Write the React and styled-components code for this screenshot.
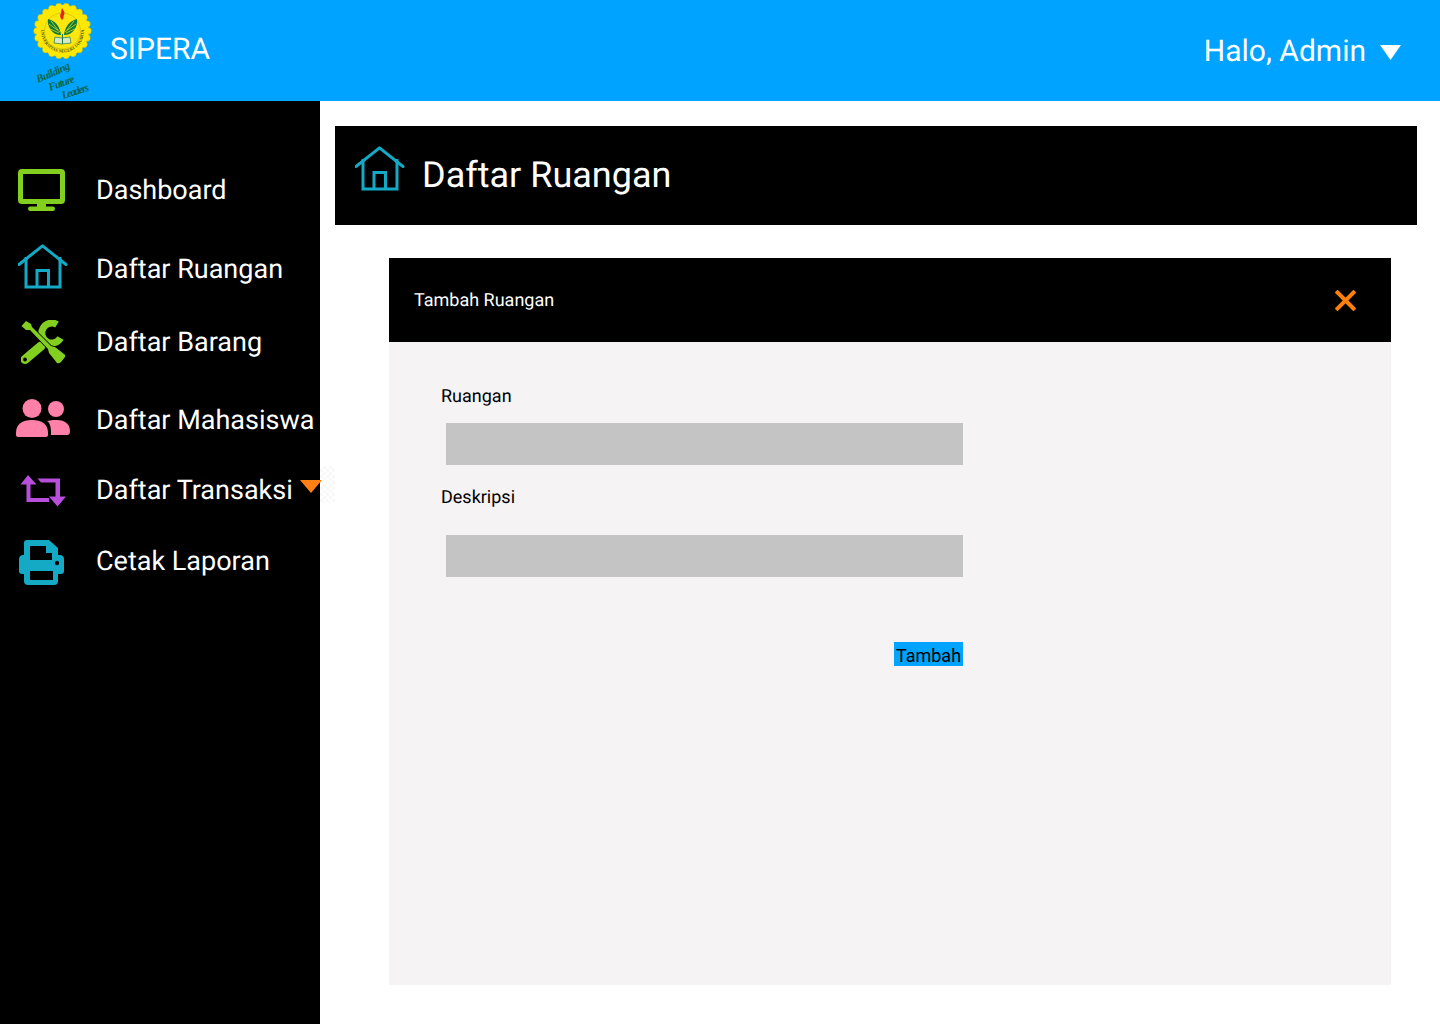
import React from "react";
import styled, { createGlobalStyle } from "styled-components";

const GlobalStyle = createGlobalStyle`
  html, body { margin: 0; padding: 0; background: #fff; }
  body { font-family: Roboto, "Liberation Sans", sans-serif; text-rendering: geometricPrecision; }
  * { box-sizing: border-box; }
`;

const Page = styled.div`
  width: 1440px;
  height: 1024px;
  overflow: hidden;
  display: flex;
  flex-direction: column;
`;

const Header = styled.header`
  height: 101px;
  flex: none;
  background: #00a3ff;
  color: #fff;
  display: flex;
  align-items: center;
  padding: 0 39px 0 30px;
`;

const Brand = styled.div`
  font-size: 30px;
  margin-left: 15px;
  margin-top: -3px;
`;

const UserMenu = styled.div`
  margin-left: auto;
  display: flex;
  align-items: center;
  gap: 14px;
  font-size: 30px;
  padding-top: 2px;
`;

const Caret = styled.span`
  width: 21px;
  height: 15px;
  background: #fff;
  clip-path: polygon(0 0, 100% 0, 50% 100%);
  margin-top: 2px;
`;

const Body = styled.div`
  flex: 1;
  display: flex;
`;

const Sidebar = styled.nav`
  width: 320px;
  flex: none;
  background: #000;
  padding-top: 50px;
  color: #fff;
`;

const MenuRow = styled.div`
  position: relative;
  height: ${(p) => p.$h}px;
  display: flex;
  align-items: center;
  font-size: 27px;
  white-space: nowrap;
`;

const IconSlot = styled.span`
  width: 96px;
  flex: none;
  display: flex;
  svg {
    display: block;
    margin-left: ${(p) => p.$x}px;
    transform: translateY(${(p) => p.$y}px);
  }
`;

const Ghost = styled.span`
  position: absolute;
  left: 320px;
  top: 1px;
  width: 15px;
  height: 37px;
  background: repeating-conic-gradient(#f8f8f8 0 25%, #fff 0 50%) 0 0 / 6px 6px;
`;

const OrangeCaret = styled.span`
  position: absolute;
  left: 300px;
  top: 15px;
  width: 22px;
  height: 13px;
  background: #ff7f17;
  clip-path: polygon(0 0, 100% 0, 50% 100%);
`;

const Main = styled.main`
  flex: 1;
  padding: 25px 23px 0 15px;
`;

const TitleBar = styled.div`
  height: 99px;
  background: #000;
  color: #fff;
  display: flex;
  align-items: center;
  padding: 0 0 2px 20px;
  gap: 17px;
  font-size: 36px;
  svg { margin-top: -12px; }
`;

const Modal = styled.section`
  margin: 33px 26px 0 54px;
  height: 727px;
  background: #f5f3f4;
`;

const ModalHead = styled.div`
  height: 84px;
  background: #000;
  color: #fff;
  display: flex;
  align-items: center;
  justify-content: space-between;
  padding: 0 35px 0 25px;
  font-size: 18px;
`;

const Form = styled.form`
  width: 574px;
  padding: 44px 0 0 52px;
  display: flex;
  flex-direction: column;
  align-items: flex-start;
`;

const Label = styled.label`
  font-size: 18px;
  line-height: 21px;
  color: #000;
  margin-top: ${(p) => p.$top || 0}px;
`;

const Input = styled.input`
  display: block;
  width: 517px;
  height: 42px;
  margin: ${(p) => p.$top}px 0 0 5px;
  background: #c4c4c4;
  border: none;
  padding: 0;
`;

const SubmitButton = styled.button`
  align-self: flex-end;
  margin-top: 65px;
  height: 24px;
  width: 69px;
  padding: 4px 0 0;
  border: none;
  background: #00a3ff;
  color: #000;
  font-family: inherit;
  font-size: 18px;
  line-height: 20px;
`;

const Logo = () => {
  const bumps = [];
  for (let i = 0; i < 22; i++) {
    const a = (i / 22) * Math.PI * 2;
    bumps.push(
      <circle key={i} cx={62.5 + 25.5 * Math.cos(a)} cy={30 + 24.5 * Math.sin(a)} r="3.4" fill="#ffe800" stroke="#b5a81a" strokeWidth="0.4" />
    );
  }
  return (
    <svg width="65" height="100" viewBox="30 0 65 100">
      {bumps}
      <circle cx="62.5" cy="30" r="26" fill="#ffe800" />
      <circle cx="62.5" cy="30" r="18" fill="#fbe70e" stroke="#a59a16" strokeWidth="0.4" />
      <defs>
        <path id="ring" d="M41 30 A21.5 21.5 0 0 0 84 30" />
      </defs>
      <text fontSize="4.4" fontFamily="Liberation Serif, serif" fill="#4a5a18" fontWeight="700">
        <textPath href="#ring" startOffset="50%" textAnchor="middle">UNIVERSITAS NEGERI JAKARTA</textPath>
      </text>
      <path d="M62 7 C65 11 65 13 63.5 15 C64 17 63 18 62 19 C60 17 59.5 14 61 12 C61 10 61.5 9 62 7Z" fill="#e2231a" />
      <path d="M61 34 C60 26 56 20 48 18 C47 26 52 34 61 34Z" fill="#0d7a3e" />
      <path d="M64 34 C65 26 69 20 77 18 C78 26 73 34 64 34Z" fill="#0d7a3e" />
      <path d="M49 23 L60 31 M51 20 L58 29 M48 27 L59 32 M76 23 L65 31 M74 20 L67 29 M77 27 L66 32" stroke="#fbe70e" strokeWidth="0.7" />
      <path d="M55 36 L62 37 L70 36 L71 42 L62 43 L54 42Z" fill="#d9e8c9" stroke="#1d7a48" strokeWidth="0.7" />
      <path d="M62.5 33 V43" stroke="#1d7a48" strokeWidth="1" />
      <g fontFamily="Liberation Serif, serif" fontStyle="italic" fontWeight="700" fontSize="11" fill="#07664a">
        <text transform="translate(38 82) rotate(-24)" textLength="36">Building</text>
        <text transform="translate(50 90) rotate(-20)" textLength="27">Future</text>
        <text transform="translate(63 98) rotate(-18)" textLength="28">Leaders</text>
      </g>
    </svg>
  );
};

const MonitorIcon = () => (
  <svg width="47" height="42" viewBox="0 0 47 42">
    <rect x="2.5" y="2.5" width="42" height="30" rx="1.5" fill="none" stroke="#82cf1f" strokeWidth="5" />
    <path d="M19 34 H28 V38 H19Z" fill="#82cf1f" />
    <rect x="10" y="37.5" width="27" height="4.5" rx="2.2" fill="#82cf1f" />
  </svg>
);

const HouseIcon = () => (
  <svg width="50" height="45" viewBox="0 0 50 45" fill="none" stroke="#14a9c5" strokeWidth="3">
    <path d="M1 20.5 L24.5 1.8 L48 20.5" strokeLinecap="round" strokeLinejoin="round" />
    <path d="M8 13 V43 H42 V13" />
    <path d="M19 43 V26.5 H30.5 V43" />
  </svg>
);

const ToolsIcon = () => (
  <svg width="45" height="44" viewBox="0 0 45 44">
    <path d="M36 4.5 A10 10 0 1 0 39.5 18" fill="none" stroke="#82cf1f" strokeWidth="7" />
    <path d="M4 39.5 L20 26" stroke="#82cf1f" strokeWidth="9" strokeLinecap="round" />
    <circle cx="4" cy="39.5" r="1.9" fill="#000" />
    <path
      d="M5 1 L0.5 6 L5 10 L9 10 L27 29 L28 33 L36 43 Q38 44 40 42 L44 37 Q45 35 43 34 L34 27 L30 26 L11 7 L10 4Z"
      fill="#82cf1f"
      stroke="#000"
      strokeWidth="1.5"
      paintOrder="stroke"
    />
  </svg>
);

const UsersIcon = () => (
  <svg width="54" height="38" viewBox="0 0 54 38" fill="#ff80a8">
    <circle cx="16" cy="9.5" r="9.5" />
    <circle cx="40" cy="10" r="8" />
    <path d="M0 34 C0 25 6 21 16 21 C26 21 32 25 32 34 V36 Q32 38 30 38 H2 Q0 38 0 36Z" />
    <path d="M34 21.5 C36 21 38 21 41 21 C49 21 54 25 54 32 Q54 36 51 36 H35 V33 C35 28 34 24 31 22Z" />
  </svg>
);

const RetweetIcon = () => (
  <svg width="46" height="33" viewBox="0 0 46 33" fill="#b84fdc">
    <path d="M8 1 L16.5 10.5 H10.5 V24 H29 V28 H6.5 V10.5 H0.5Z" />
    <path d="M17.5 4.5 H40 V22.5 H46 L37.5 32.5 L29 22.5 H35.5 V8.5 H21Z" />
  </svg>
);

const PrinterIcon = () => (
  <svg width="45" height="45" viewBox="0 0 45 45">
    <path d="M8 0 H30 L39 8 V15 H42 Q45 16 45 19 V31 Q45 34 42 34 H39 V41 Q39 45 35 45 H9 Q5 45 5 41 V34 H3 Q0 34 0 31 V19 Q0 16 3 15 H5 V3 Q5 0 8 0Z" fill="#14a9c5" />
    <path d="M11 6 H27 V13 H33 V20 H11Z" fill="#000" />
    <path d="M11 31 H34 V40 H11Z" fill="#000" />
    <path d="M5 28 H40" stroke="#14a9c5" strokeWidth="2" />
    <circle cx="38" cy="23" r="2.2" fill="#000" />
  </svg>
);

const CloseIcon = () => (
  <svg width="21" height="21" viewBox="0 0 21 21" fill="none" stroke="#ff7f0a" strokeWidth="4" strokeLinecap="square">
    <path d="M2.5 2.5 L18.5 18.5 M18.5 2.5 L2.5 18.5" />
  </svg>
);

const menu = [
  { label: "Dashboard", h: 78, x: 18, y: 0, Icon: MonitorIcon },
  { label: "Daftar Ruangan", h: 80, x: 18, y: -3, Icon: HouseIcon },
  { label: "Daftar Barang", h: 66, x: 21, y: 0, Icon: ToolsIcon },
  { label: "Daftar Mahasiswa", h: 90, x: 16, y: -2, Icon: UsersIcon },
  { label: "Daftar Transaksi", h: 50, x: 20, y: 0, Icon: RetweetIcon, more: true },
  { label: "Cetak Laporan", h: 92, x: 19, y: 1, Icon: PrinterIcon },
];

export default function App() {
  return (
    <Page>
      <GlobalStyle />
      <Header>
        <Logo />
        <Brand>SIPERA</Brand>
        <UserMenu>
          Halo, Admin
          <Caret />
        </UserMenu>
      </Header>
      <Body>
        <Sidebar>
          {menu.map(({ label, h, x, y, Icon, more }) => (
            <MenuRow key={label} $h={h}>
              <IconSlot $x={x} $y={y}>
                <Icon />
              </IconSlot>
              {label}
              {more && <Ghost />}
              {more && <OrangeCaret />}
            </MenuRow>
          ))}
        </Sidebar>
        <Main>
          <TitleBar>
            <HouseIcon />
            Daftar Ruangan
          </TitleBar>
          <Modal>
            <ModalHead>
              Tambah Ruangan
              <CloseIcon />
            </ModalHead>
            <Form onSubmit={(e) => e.preventDefault()}>
              <Label>Ruangan</Label>
              <Input $top={16} />
              <Label $top={22}>Deskripsi</Label>
              <Input $top={27} />
              <SubmitButton>Tambah</SubmitButton>
            </Form>
          </Modal>
        </Main>
      </Body>
    </Page>
  );
}
